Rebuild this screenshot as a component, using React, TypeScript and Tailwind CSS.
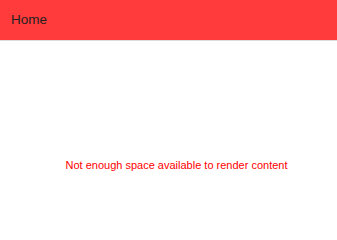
export default function App() {
  return (
    <div className="w-[337px] h-[239px] bg-white flex flex-col" style={{ fontFamily: '"Liberation Sans", Arial, sans-serif' }}>
      <header className="h-[41px] bg-[#ff3b3b] border-b border-[#dcdcdc] flex items-center px-[11px]">
        <h1 className="text-[13.5px] text-[#222] pt-px">Home</h1>
      </header>
      <main className="flex-1 flex items-center justify-center pl-4 pt-12">
        <p className="text-[11px] text-[#f00] pt-0.5">Not enough space available to render content</p>
      </main>
    </div>
  )
}
